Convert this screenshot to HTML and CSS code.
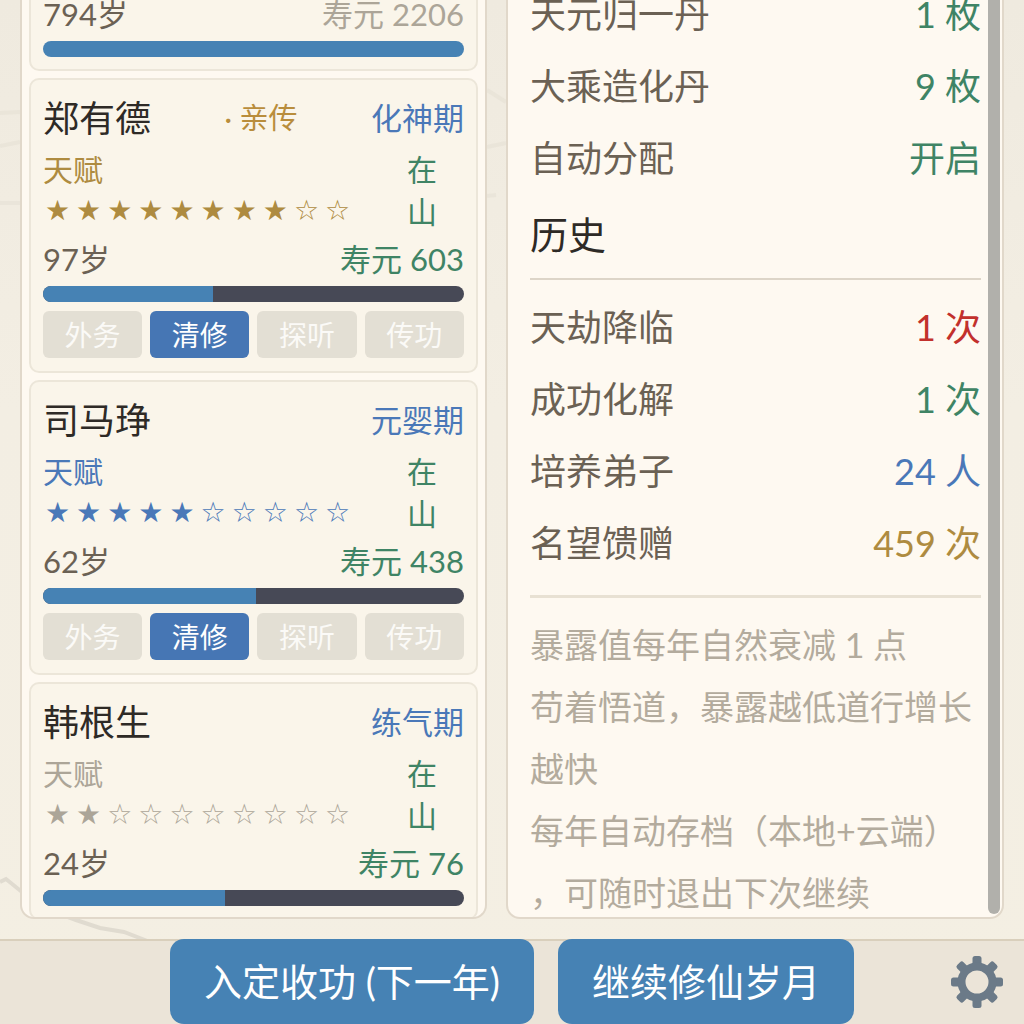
FILE: index.html
```html
<!DOCTYPE html>
<html lang="zh-CN">
<head>
  <meta charset="UTF-8" />
  <meta name="viewport" content="width=device-width, initial-scale=1" />
  <title>修仙岁月</title>
  <link rel="stylesheet" href="styles.css">
</head>
<body>

  <!-- Ink mountains behind the panels -->
  <svg class="scenery" viewBox="0 0 1024 1024" preserveAspectRatio="none" aria-hidden="true">
    <path d="M0 882 L6 879 L22 892 L44 908 L76 920 L100 928 L124 932 L150 942" />
    <path opacity="0.4" d="M0 113 L20 112 M0 146 L20 142 M0 203 L20 203 M487 90 L506 102 M487 147 L506 143 M487 196 L496 195" />
  </svg>

  <main class="panels">
    <!-- Disciples -->
    <section class="panel disciples">
      <article class="card">
        <div class="age-row">
          <span>794岁</span>
          <span class="muted">寿元 2206</span>
        </div>
        <div class="life-bar"><div class="life-fill" style="width: 100%"></div></div>
      </article>

      <article class="card">
        <div class="name-row">
          <h3>郑有德</h3>
          <span class="rank">· 亲传</span>
          <span class="stage">化神期</span>
        </div>
        <div class="talent-row gold">
          <div class="talent">
            <span>天赋</span>
            <div class="stars"><span>★</span><span>★</span><span>★</span><span>★</span><span>★</span><span>★</span><span>★</span><span>★</span><span>☆</span><span>☆</span></div>
          </div>
          <span class="status">在山</span>
        </div>
        <div class="age-row">
          <span>97岁</span>
          <span class="green">寿元 603</span>
        </div>
        <div class="life-bar"><div class="life-fill" style="width: 40.5%"></div></div>
        <div class="tasks">
          <button type="button">外务</button>
          <button type="button" class="active">清修</button>
          <button type="button">探听</button>
          <button type="button">传功</button>
        </div>
      </article>

      <article class="card">
        <div class="name-row">
          <h3>司马琤</h3>
          <span class="stage">元婴期</span>
        </div>
        <div class="talent-row blue">
          <div class="talent">
            <span>天赋</span>
            <div class="stars"><span>★</span><span>★</span><span>★</span><span>★</span><span>★</span><span>☆</span><span>☆</span><span>☆</span><span>☆</span><span>☆</span></div>
          </div>
          <span class="status">在山</span>
        </div>
        <div class="age-row">
          <span>62岁</span>
          <span class="green">寿元 438</span>
        </div>
        <div class="life-bar"><div class="life-fill" style="width: 50.7%"></div></div>
        <div class="tasks">
          <button type="button">外务</button>
          <button type="button" class="active">清修</button>
          <button type="button">探听</button>
          <button type="button">传功</button>
        </div>
      </article>

      <article class="card">
        <div class="name-row">
          <h3>韩根生</h3>
          <span class="stage">练气期</span>
        </div>
        <div class="talent-row muted">
          <div class="talent">
            <span>天赋</span>
            <div class="stars"><span>★</span><span>★</span><span>☆</span><span>☆</span><span>☆</span><span>☆</span><span>☆</span><span>☆</span><span>☆</span><span>☆</span></div>
          </div>
          <span class="status">在山</span>
        </div>
        <div class="age-row">
          <span>24岁</span>
          <span class="green">寿元 76</span>
        </div>
        <div class="life-bar"><div class="life-fill" style="width: 43.2%"></div></div>
      </article>
    </section>

    <!-- Stats -->
    <section class="panel stats">
      <div class="stats-content">
        <div class="stat"><span>天元归一丹</span><span class="green">1 枚</span></div>
        <div class="stat"><span>大乘造化丹</span><span class="green">9 枚</span></div>
        <div class="stat"><span>自动分配</span><span class="green">开启</span></div>

        <h2>历史</h2>
        <div class="stat"><span>天劫降临</span><span class="red">1 次</span></div>
        <div class="stat"><span>成功化解</span><span class="green">1 次</span></div>
        <div class="stat"><span>培养弟子</span><span class="blue">24 人</span></div>
        <div class="stat"><span>名望馈赠</span><span class="gold">459 次</span></div>

        <div class="notes">
          <p>暴露值每年自然衰减 1 点</p>
          <p>苟着悟道，暴露越低道行增长越快</p>
          <p>每年自动存档（本地+云端）<br>，可随时退出下次继续</p>
        </div>
      </div>
      <div class="scroll-thumb"></div>
    </section>
  </main>

  <footer class="action-bar">
    <button type="button" class="btn-main">入定收功 (下一年)</button>
    <button type="button" class="btn-main">继续修仙岁月</button>
    <button type="button" class="btn-settings" aria-label="设置">
      <svg viewBox="-27 -27 54 54" width="54" height="54" fill="#6b7a88">
        <rect x="-4.5" y="-26" width="9" height="52" rx="2.5" mask="url(#hole)" />
        <rect x="-4.5" y="-26" width="9" height="52" rx="2.5" transform="rotate(45)" mask="url(#hole)" />
        <rect x="-4.5" y="-26" width="9" height="52" rx="2.5" transform="rotate(90)" mask="url(#hole)" />
        <rect x="-4.5" y="-26" width="9" height="52" rx="2.5" transform="rotate(135)" mask="url(#hole)" />
        <circle r="15.5" fill="none" stroke="#6b7a88" stroke-width="8" />
        <mask id="hole" maskUnits="userSpaceOnUse" x="-27" y="-27" width="54" height="54">
          <rect x="-27" y="-27" width="54" height="54" fill="#fff" />
          <circle r="13" fill="#000" />
        </mask>
      </svg>
    </button>
  </footer>

</body>
</html>
```
FILE: styles.css
```css
* {
  box-sizing: border-box;
}

body {
  margin: 0;
  height: 100vh;
  display: flex;
  flex-direction: column;
  overflow: hidden;
  font-family: Lato, "Noto Sans CJK SC", sans-serif;
  color: #6b6154;
  background: linear-gradient(180deg, #efeadf 0%, #f3eee3 40%, #f4efe3 100%);
}

h2,
h3,
p {
  margin: 0;
  font-weight: 400;
}

button {
  border: none;
  padding: 0;
  font-family: inherit;
  color: #fff;
  cursor: pointer;
}

.scenery {
  position: absolute;
  inset: 0;
  z-index: -1;
  width: 100%;
  height: 100%;
  fill: none;
  stroke: #e0dbd0;
  stroke-width: 4;
}

.gold { color: #ae8b40; }
.blue { color: #4a78b8; }
.green { color: #3f8465; }
.red { color: #c2302c; }
.muted { color: #aca598; }

/* Panels, scrolled part of the way down */
.panels {
  flex: 1;
  min-height: 0;
  display: grid;
  grid-template-columns: 15fr 16fr;
  gap: 19px;
  padding: 0 20px;
  margin-bottom: 20px;
}

.panel {
  min-height: 0;
  overflow: hidden;
  background: #fef9f1;
  border: 2px solid #e1d8ca;
  border-top: none;
  border-radius: 0 0 14px 14px;
}

.disciples {
  display: flex;
  flex-direction: column;
  gap: 7px;
  padding: 0 7px;
}

.card {
  flex-shrink: 0;
  padding: 13px 12px 12px;
  background: #faf5ea;
  border: 2px solid #ece6d9;
  border-radius: 10px;
}

.card:first-child,
.stats-content {
  margin-top: -22px;
}

.name-row,
.age-row,
.stat {
  display: flex;
  justify-content: space-between;
  align-items: center;
}

.name-row {
  line-height: 50px;
}

.name-row h3 {
  font-size: 36px;
  color: #2e2a26;
}

.rank {
  font-size: 29px;
  color: #b98d3c;
}

.stage {
  font-size: 31px;
  color: #4a78b8;
}

.talent-row {
  display: flex;
  justify-content: space-between;
  margin: 5px 0 6px;
  font-size: 30px;
  line-height: 42px;
}

.stars {
  display: flex;
  gap: 6px;
  padding-left: 2px;
  font-family: "DejaVu Sans", sans-serif;
  font-size: 28px;
}

.status {
  width: 84px;
  padding: 0 27px;
  color: #3f8465;
}

.age-row {
  font-size: 31px;
  line-height: 42px;
}

.life-bar {
  height: 16px;
  margin-top: 6px;
  border-radius: 8px;
  overflow: hidden;
  background: #474956;
}

.life-fill {
  height: 100%;
  background: #4682b4;
}

.tasks {
  display: grid;
  grid-template-columns: repeat(4, 1fr);
  gap: 8px;
  margin: 9px 0 1px;
}

.tasks button {
  height: 47px;
  border-radius: 6px;
  font-size: 28px;
  line-height: 46px;
  color: #fbfaf7;
  background: #e3dfd4;
}

.tasks .active {
  color: #fff;
  background: #4676b4;
}

/* Stats */
.stats {
  display: flex;
  gap: 7px;
  padding: 0 2px 3px 22px;
}

.stats-content {
  flex: 1;
}

.stat {
  font-size: 36px;
  line-height: 72px;
}

.stats h2 {
  margin-bottom: 11px;
  padding-bottom: 4px;
  border-bottom: 2px solid #ddd5c8;
  font-size: 38px;
  line-height: 80px;
  color: #2e2a26;
}

.notes {
  margin-top: 16px;
  padding-top: 16px;
  border-top: 3px solid #e8e1d3;
  font-size: 34px;
  line-height: 62px;
  color: #b3ab9d;
}

.scroll-thumb {
  width: 12px;
  border-radius: 0 0 6px 6px;
  background: #b1b0ab;
}

/* Bottom actions */
.action-bar {
  position: relative;
  display: flex;
  justify-content: center;
  gap: 24px;
  background: #ebe4d8;
  box-shadow: inset 0 2px #d9cfbc;
}

.btn-main {
  height: 85px;
  padding: 0 34px 4px;
  border-radius: 14px;
  font-size: 38px;
  background: #4682b4;
}

.btn-settings {
  position: absolute;
  top: 16px;
  right: 20px;
  height: 54px;
  background: none;
}

.btn-settings svg {
  display: block;
}
```
